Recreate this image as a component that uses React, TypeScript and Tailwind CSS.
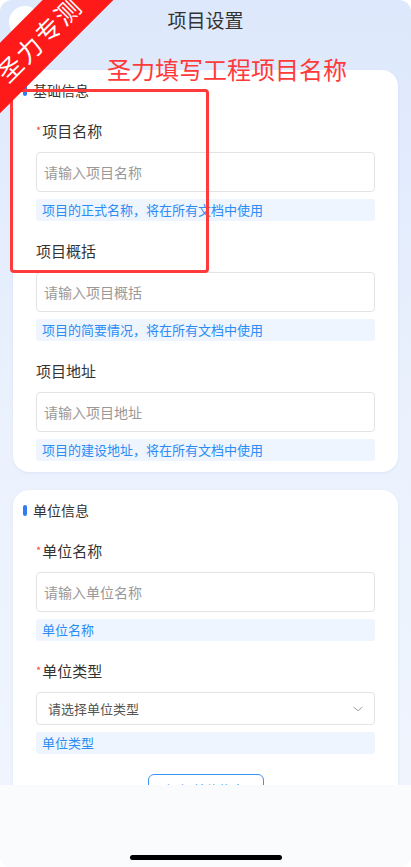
import React from "react";

type Field = {
  label: string;
  required?: boolean;
  placeholder: string;
  hint: string;
  select?: boolean;
};

const basicFields: Field[] = [
  { label: "项目名称", required: true, placeholder: "请输入项目名称", hint: "项目的正式名称，将在所有文档中使用" },
  { label: "项目概括", placeholder: "请输入项目概括", hint: "项目的简要情况，将在所有文档中使用" },
  { label: "项目地址", placeholder: "请输入项目地址", hint: "项目的建设地址，将在所有文档中使用" },
];

const unitFields: Field[] = [
  { label: "单位名称", required: true, placeholder: "请输入单位名称", hint: "单位名称" },
  { label: "单位类型", required: true, placeholder: "请选择单位类型", hint: "单位类型", select: true },
];

const FormField: React.FC<{ field: Field }> = ({ field }) => (
  <div className="flex flex-col">
    <div className="h-5 flex items-center text-[15px] text-[#333]">
      {field.required && <span className="text-[#f04a4a] text-[11px] mr-[1px] -mt-[2px]">*</span>}
      {field.label}
    </div>
    {field.select ? (
      <div className="mt-[11px] h-[33px] border border-[#e3e3e3] rounded-[4px] flex items-center justify-between pl-[11px] pr-[9px]">
        <span className="text-[13px] text-[#555]">{field.placeholder}</span>
        <svg width="14" height="14" viewBox="0 0 24 24" fill="none" stroke="#9a9a9a" strokeWidth="1.6" strokeLinecap="round" strokeLinejoin="round">
          <path d="M5 9l7 6 7-6" />
        </svg>
      </div>
    ) : (
      <div className="mt-[11px] h-10 border border-[#e3e3e3] rounded-[4px] flex items-center px-[7px] text-[14px] text-[#999]">
        {field.placeholder}
      </div>
    )}
    <div className="mt-[7px] h-[22px] bg-[#eef5ff] rounded-[3px] flex items-center px-[6px] text-[13px] text-[#2b8cf3]">
      {field.hint}
    </div>
  </div>
);

const Section: React.FC<{ title: string; fields: Field[]; children?: React.ReactNode }> = ({ title, fields, children }) => (
  <div className="bg-white rounded-[16px] mx-[13px] pt-[10px] pb-[11px] shadow-[0_1px_3px_rgba(120,150,220,0.15)]">
    <div className="h-5 flex items-center pl-[10px] text-[14px] text-[#333]">
      <span className="w-[4px] h-[11px] bg-[#2f7cf6] rounded-full mr-[6px]" />
      {title}
    </div>
    <div className="flex flex-col gap-5 px-[23px] mt-[21px]">
      {fields.map((f) => (
        <FormField key={f.label} field={f} />
      ))}
      {children}
    </div>
  </div>
);

export default function App() {
  return (
    <div className="w-[411px] h-[867px] bg-white" style={{ fontFamily: '"Noto Sans CJK SC", "Noto Sans", sans-serif' }}>
      <div className="relative w-full h-full overflow-hidden rounded-[12px] bg-gradient-to-b from-[#dde8fc] via-[#ebf2fd] to-[#f0f5fd]">
        {/* header */}
        <div className="h-10 flex items-center justify-center text-[19px] text-[#333]">项目设置</div>
        <div className="h-[30px]" />

        <div className="flex flex-col gap-[18px]">
          <Section title="基础信息" fields={basicFields} />
          <Section title="单位信息" fields={unitFields}>
            <div className="flex justify-center">
              <div className="w-[116px] h-8 border border-[#3d93f5] rounded-[6px] flex items-center justify-center text-[13px] text-[#3d93f5]">
                添加单位信息
              </div>
            </div>
          </Section>
        </div>

        {/* back button */}
        <div className="absolute left-[9px] top-[6px] w-[32px] h-[32px] rounded-full bg-white flex items-center justify-center">
          <svg width="14" height="14" viewBox="0 0 24 24" fill="none" stroke="#111" strokeWidth="3" strokeLinecap="round" strokeLinejoin="round">
            <path d="M15 5l-7 7 7 7" />
          </svg>
        </div>

        {/* annotation */}
        <div className="absolute left-[107px] top-[54px] text-[24px] leading-[30px] text-[#ff3a3a]">圣力填写工程项目名称</div>
        <div className="absolute left-[10px] top-[89px] w-[199px] h-[184px] border-[3px] border-[#ff3a3a] rounded-[4px]" />

        {/* ribbon */}
        <div className="absolute left-[-51px] top-[14px] w-[180px] h-[50px] bg-[#ff1a1a] -rotate-45 flex items-center justify-center text-white text-[25px] tracking-[2px]">
          圣力专测
        </div>

        {/* bottom bar */}
        <div className="absolute left-0 right-0 bottom-0 h-[82px] bg-[#fafbfc] flex items-end justify-center pb-[7px]">
          <div className="w-[152px] h-[5px] rounded-full bg-black" />
        </div>
      </div>
    </div>
  );
}
